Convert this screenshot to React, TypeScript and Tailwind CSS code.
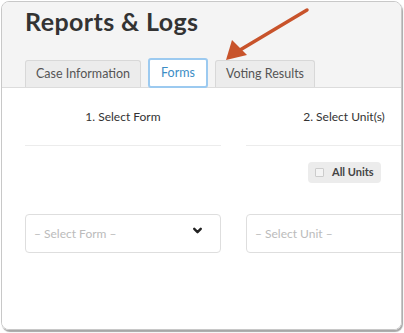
import { ChevronDown } from "lucide-react";

function Tab({ label, active }: { label: string; active?: boolean }) {
  if (active) {
    return (
      <div className="h-[30px] px-[11px] flex items-center bg-white border-2 border-[#9ccaf0] rounded-[3px] text-[12.5px] text-[#3c8dc5] -mb-[1px] relative z-10">
        {label}
      </div>
    );
  }
  return (
    <div className="h-[27px] px-[10px] flex items-center bg-[#ececec] border border-[#d8d8d8] border-b-0 rounded-t-[3px] text-[12.5px] text-[#555]">
      {label}
    </div>
  );
}

export default function App() {
  return (
    <div className="w-[404px] h-[333px] bg-white p-[1px] pb-[3px] pr-[2px]" style={{ fontFamily: "Lato, 'Open Sans', sans-serif" }}>
      <div className="w-full h-full rounded-[8px] border border-[#c8c8c8] shadow-[1px_2px_1px_rgba(0,0,0,0.35)] overflow-hidden flex flex-col relative">
        <div className="bg-[#f4f4f4] px-[23px] pt-[4px]">
          <h1 className="text-[25px] font-bold text-[#333] tracking-[0.4px] leading-[30px]">Reports &amp; Logs</h1>
          <div className="flex items-end gap-[7px] mt-[22px]">
            <Tab label="Case Information" />
            <Tab label="Forms" active />
            <Tab label="Voting Results" />
          </div>
        </div>
        <div className="flex-1 bg-white border-t border-[#dcdcdc] px-[23px] flex gap-[25px]">
          <div className="w-[196px] shrink-0 flex flex-col">
            <div className="h-[58px] flex items-center justify-center text-[12px] text-[#333] border-b border-[#ececec]">1. Select Form</div>
            <div className="h-[68px]" />
            <div className="h-[39px] border border-[#dedede] rounded-[4px] flex items-center justify-between pl-[8px] pr-[16px]">
              <span className="text-[12px] text-[#bbb]">– Select Form –</span>
              <ChevronDown className="w-[13px] h-[13px] text-[#222] mb-[6px]" strokeWidth={4.5} />
            </div>
          </div>
          <div className="w-[196px] shrink-0 flex flex-col">
            <div className="h-[58px] flex items-center justify-center text-[12px] text-[#333] border-b border-[#ececec]">2. Select Unit(s)</div>
            <div className="h-[68px] flex items-start justify-start pl-[62px] pt-[16px]">
              <div className="h-[21px] px-[7px] rounded-[4px] bg-[#ececec] flex items-center gap-[8px]">
                <span className="w-[9px] h-[9px] border border-[#ccc] bg-[#f4f4f4] rounded-[1px]" />
                <span className="text-[11px] font-bold text-[#444]">All Units</span>
              </div>
            </div>
            <div className="h-[39px] border border-[#dedede] rounded-[4px] flex items-center px-[8px]">
              <span className="text-[12px] text-[#bbb]">– Select Unit –</span>
            </div>
          </div>
        </div>
        <svg className="absolute left-0 top-0 pointer-events-none" width="404" height="100">
          <line x1="305" y1="8" x2="238" y2="48" stroke="#c8532b" strokeWidth="3.5" strokeLinecap="round" />
          <polygon points="224,58 230,38 245,53" fill="#c8532b" />
        </svg>
      </div>
    </div>
  );
}
